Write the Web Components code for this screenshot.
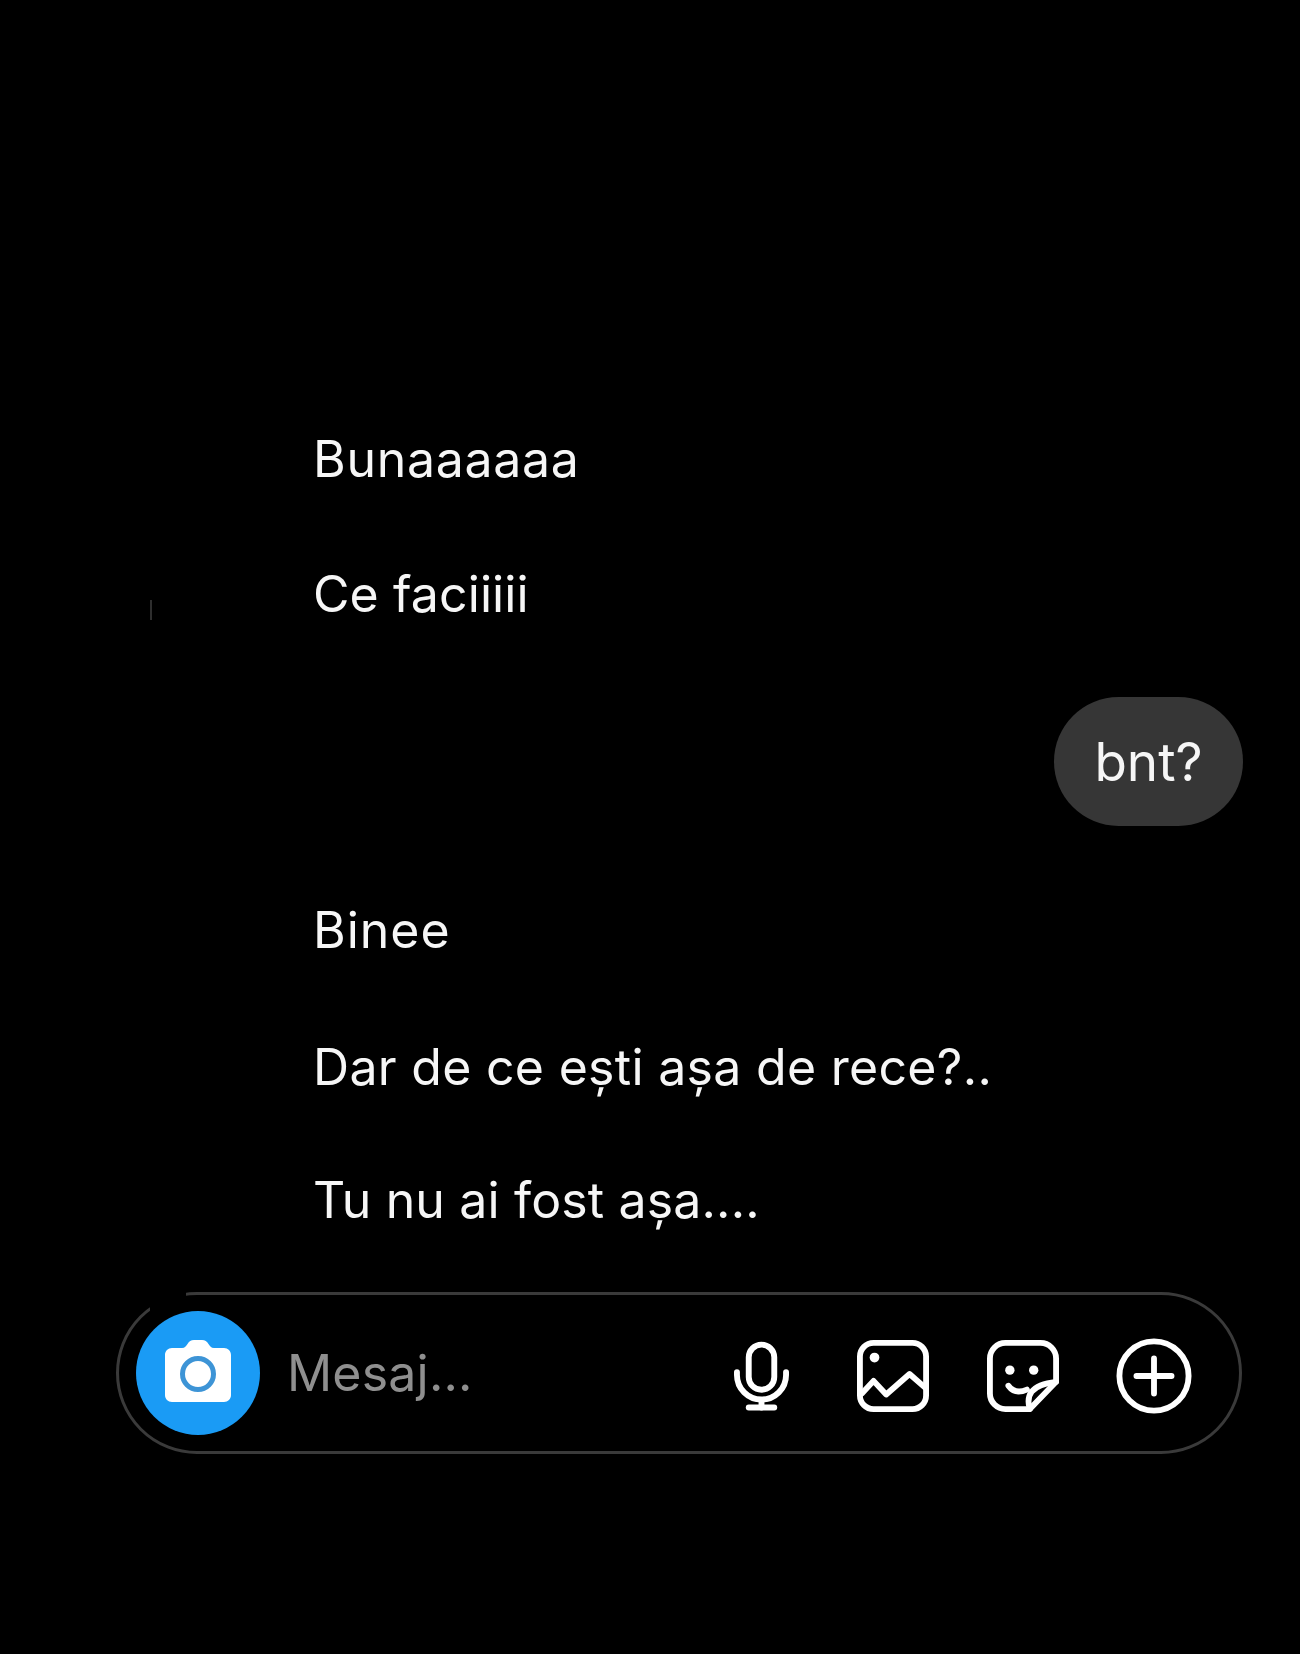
<!DOCTYPE html>
<html><head><meta charset="utf-8">
<style>
html,body{margin:0;background:#000}
body{width:1300px;height:1654px;overflow:hidden;font-family:Inter,"Liberation Sans",sans-serif;color:#f6f6f6}
chat-page{filter:blur(.5px)}
</style></head><body>
<chat-page>
  <chat-line style="letter-spacing:.7px">Bunaaaaaa</chat-line>
  <chat-line tick style="letter-spacing:.1px">Ce faciiiii</chat-line>
  <chat-bubble>bnt?</chat-bubble>
  <chat-line style="letter-spacing:1px">Binee</chat-line>
  <chat-line style="letter-spacing:.3px;--dy:3px">Dar de ce ești așa de rece?..</chat-line>
  <chat-line style="letter-spacing:.15px">Tu nu ai fost așa....</chat-line>
  <chat-composer placeholder="Mesaj..."></chat-composer>
</chat-page>
<script>
function def(name, html, init){
  customElements.define(name, class extends HTMLElement{
    constructor(){super();this.attachShadow({mode:'open'}).innerHTML=html;}
    connectedCallback(){ if(init) init(this); }
  });
}
def('chat-page',`<style>
:host{display:flex;flex-direction:column;width:1300px;height:1654px;box-sizing:border-box;padding:392px 57px 0 116px}
</style><slot></slot>`);

def('chat-line',`<style>
:host{display:flex;height:135px;box-sizing:border-box;padding-top:var(--dy,0);align-items:center;font-size:50px;font-weight:420;line-height:135px;white-space:nowrap}
.av{width:163px;flex:none;display:flex;align-items:center;padding-top:30px;height:20px;padding-left:34px;box-sizing:content-box}
.tick{display:none;width:2px;height:20px;background:#2e2e2e}
:host([tick]) .tick{display:block}
</style><span class="av"><span class="tick"></span></span><slot></slot>`);

def('chat-bubble',`<style>
:host{display:flex;align-self:flex-end;align-items:center;justify-content:center;width:189px;height:129px;margin:35px 0 37px;border-radius:64.5px;background:#363636;font-size:53px;white-space:nowrap}
</style><slot></slot>`);

const mic=`<svg width="55" height="70" viewBox="0 0 56 70" fill="none" stroke="#fff" stroke-width="6" stroke-linecap="round" stroke-linejoin="round">
<rect x="15" y="3" width="26" height="46" rx="13"/>
<path d="M3 31v3a25 25 0 0 0 50 0v-3"/><path d="M28 60v7"/><path d="M15 67h26"/></svg>`;
const img=`<svg width="72" height="72" viewBox="0 0 74 74" fill="none" stroke="#fff" stroke-width="6" stroke-linecap="round" stroke-linejoin="round">
<rect x="3" y="3" width="68" height="68" rx="14"/>
<circle cx="18" cy="18" r="5" fill="#fff" stroke="none"/>
<path d="M5 55 L17 42 L30 56 L54 35 L70 49"/></svg>`;
const stk=`<svg width="72" height="72" viewBox="0 0 74 74" fill="none" stroke="#fff" stroke-width="6" stroke-linecap="round" stroke-linejoin="round">
<path d="M44 71H19A16 16 0 0 1 3 55V19A16 16 0 0 1 19 3H55A16 16 0 0 1 71 19V43Z"/>
<path d="M44 71C40 58 44 46 71 43"/>
<circle cx="23.500" cy="31" r="4.800" fill="#fff" stroke="none"/><circle cx="48" cy="31" r="4.800" fill="#fff" stroke="none"/>
<path d="M22 47C27 54 34 54 41 51"/></svg>`;
const plus=`<svg width="76" height="76" viewBox="0 0 78 78" fill="none" stroke="#fff" stroke-width="6" stroke-linecap="round">
<circle cx="39" cy="39" r="35.500"/><path d="M39 21v36M21 39h36"/></svg>`;
const cam=`<svg width="66" height="62" viewBox="0 0 66 62">
<path fill="#fff" d="M7 8H17C20 8 21 6 22.500 4C24 1.500 26 0 29 0H37C40 0 42 1.500 43.500 4C45 6 46 8 49 8H59C63 8 66 11 66 15V55C66 59 63 62 59 62H7C3 62 0 59 0 55V15C0 11 3 8 7 8Z"/>
<circle cx="33" cy="34" r="15.500" fill="#fff" stroke="#3d94d6" stroke-width="5"/></svg>`;

def('chat-composer',`<style>
:host{display:flex;align-items:center;box-sizing:border-box;width:1126px;height:162px;margin-top:24px;position:relative;border:3px solid #3a3a3a;border-radius:81px;padding-left:17px}
.mask{position:absolute;left:31px;top:-4px;width:36px;height:20px;background:#000}
.cam{width:124px;height:124px;border-radius:50%;background:#1a9bf5;display:flex;align-items:center;justify-content:center;flex:none;padding-bottom:4px;box-sizing:border-box}
.ph{font-size:50px;font-weight:420;letter-spacing:.2px;color:#8f8f8f;margin-left:27px;flex:1}
.ic{display:flex;align-items:center;flex:none;margin-top:6px}
.ic svg{display:block}
</style>
<div class="mask"></div>
<div class="cam">${cam}</div>
<div class="ph"></div>
<div class="ic" style="margin-right:68px">${mic}</div>
<div class="ic" style="margin-right:58px">${img}</div>
<div class="ic" style="margin-right:57px">${stk}</div>
<div class="ic" style="margin-right:47px">${plus}</div>`, el=>{
  el.shadowRoot.querySelector('.ph').textContent=el.getAttribute('placeholder');
});
</script>
</body></html>
